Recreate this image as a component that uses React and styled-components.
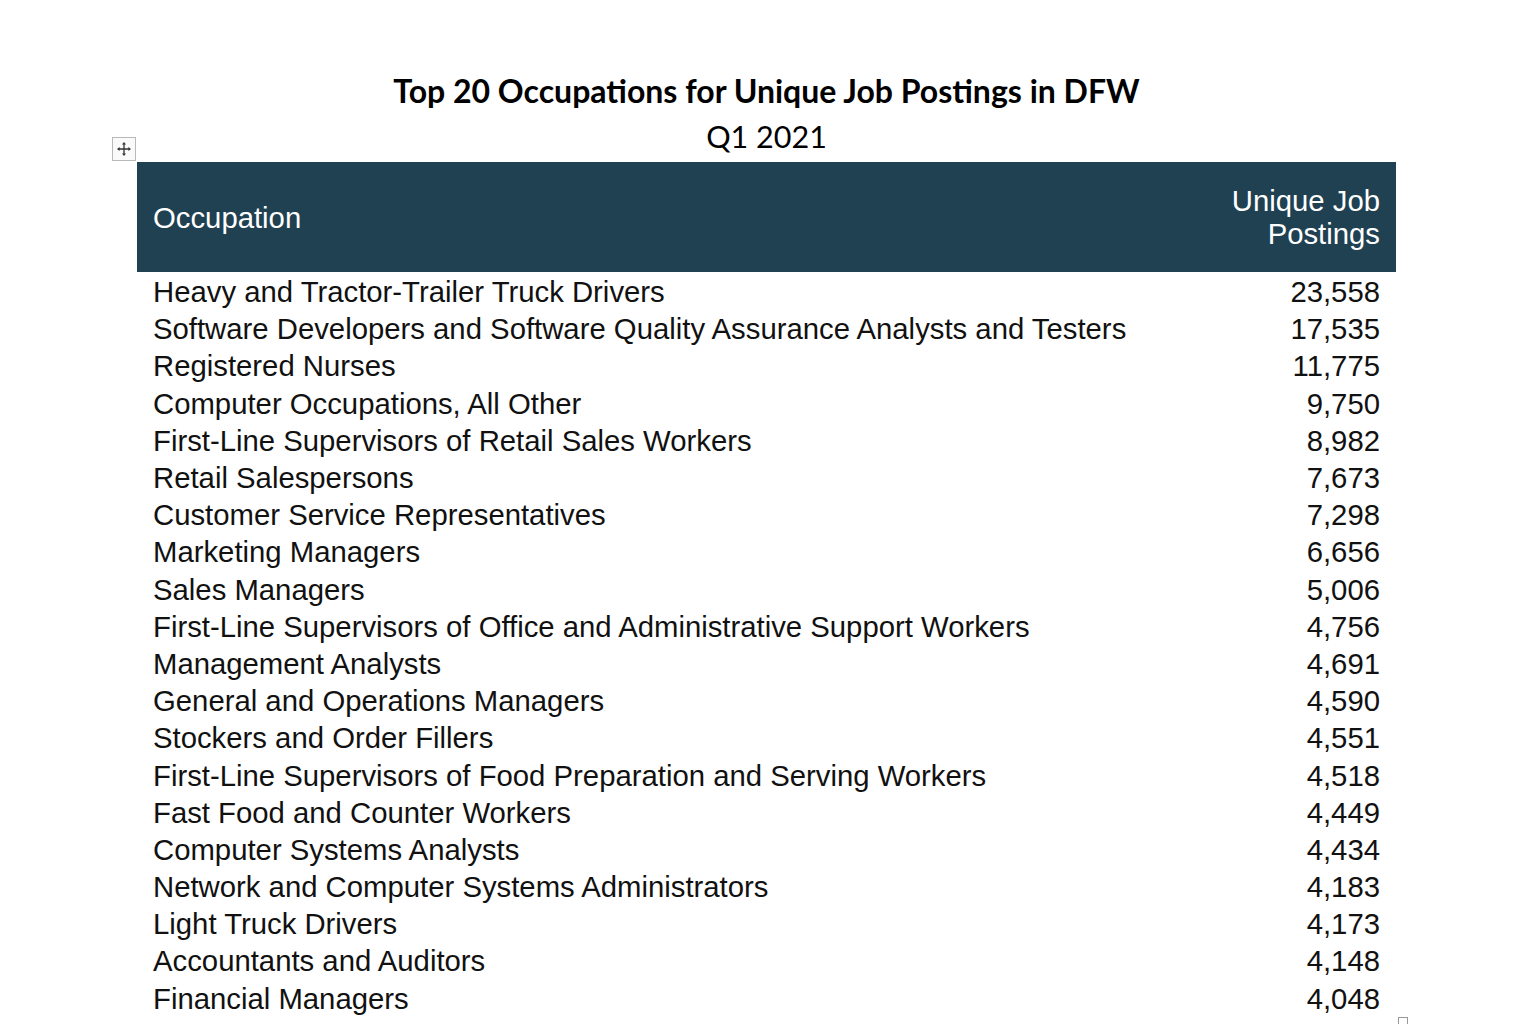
import React from "react";
import styled, { createGlobalStyle } from "styled-components";

const GlobalStyle = createGlobalStyle`
  html, body {
    margin: 0;
    padding: 0;
    background: #ffffff;
  }
  body {
    width: 1536px;
    height: 1024px;
    overflow: hidden;
  }
`;

const Page = styled.div`
  padding: 72px 140px 0 137px;
  box-sizing: border-box;
  width: 1536px;
`;

const Heading = styled.div`
  text-align: center;
  font-family: "Lato", "Open Sans", sans-serif;
  color: #000;
  position: relative;
`;

const Title = styled.h1`
  margin: 0;
  font-size: 32px;
  font-weight: 700;
  line-height: 38px;
`;

const Subtitle = styled.div`
  font-size: 30.5px;
  line-height: 52px;
`;

const MoveHandle = styled.div`
  position: absolute;
  left: -25px;
  bottom: 1px;
  width: 24px;
  height: 24px;
  box-sizing: border-box;
  border: 1px solid #b9b9b9;
  background: #fafafa;
  display: flex;
  align-items: center;
  justify-content: center;
`;

const Table = styled.table`
  width: 1259px;
  border-collapse: collapse;
  font-family: "Liberation Sans", Arial, sans-serif;
  font-size: 29.3px;
  color: #111;
`;

const HeadRow = styled.tr`
  background: #1f4152;
  height: 110px;
`;

const HeadCell = styled.th`
  color: #ffffff;
  font-weight: 400;
  text-align: ${(p) => (p.$right ? "right" : "left")};
  padding: 0 16px;
  line-height: 33px;
  vertical-align: middle;
`;

const Cell = styled.td`
  text-align: ${(p) => (p.$right ? "right" : "left")};
  padding: 0 16px;
  height: 37.2px;
  line-height: 37px;
  white-space: nowrap;
`;

const FirstRow = styled.tr`
  td {
    padding-top: 1px;
  }
`;

const rows = [
  ["Heavy and Tractor-Trailer Truck Drivers", "23,558"],
  ["Software Developers and Software Quality Assurance Analysts and Testers", "17,535"],
  ["Registered Nurses", "11,775"],
  ["Computer Occupations, All Other", "9,750"],
  ["First-Line Supervisors of Retail Sales Workers", "8,982"],
  ["Retail Salespersons", "7,673"],
  ["Customer Service Representatives", "7,298"],
  ["Marketing Managers", "6,656"],
  ["Sales Managers", "5,006"],
  ["First-Line Supervisors of Office and Administrative Support Workers", "4,756"],
  ["Management Analysts", "4,691"],
  ["General and Operations Managers", "4,590"],
  ["Stockers and Order Fillers", "4,551"],
  ["First-Line Supervisors of Food Preparation and Serving Workers", "4,518"],
  ["Fast Food and Counter Workers", "4,449"],
  ["Computer Systems Analysts", "4,434"],
  ["Network and Computer Systems Administrators", "4,183"],
  ["Light Truck Drivers", "4,173"],
  ["Accountants and Auditors", "4,148"],
  ["Financial Managers", "4,048"],
];

// four-way move cross with small filled arrowheads
const MoveIcon = () => (
  <svg width="16" height="16" viewBox="0 0 16 16">
    <path d="M8 3v10M3 8h10" stroke="#333" strokeWidth="1.3" />
    <path
      d="M8 1L10 3.6H6zM8 15L10 12.4H6zM1 8L3.6 6V10zM15 8L12.4 6V10z"
      fill="#333"
    />
  </svg>
);

const ResizeHandle = styled.div`
  position: absolute;
  left: 1398px;
  top: 1017px;
  width: 8px;
  height: 8px;
  border: 1px solid #999;
  background: #fff;
`;

const App = () => (
  <>
    <GlobalStyle />
    <Page>
      <Heading>
        <Title>Top 20 Occupations for Unique Job Postings in DFW</Title>
        <Subtitle>Q1 2021</Subtitle>
        <MoveHandle>
          <MoveIcon />
        </MoveHandle>
      </Heading>
      <Table>
        <thead>
          <HeadRow>
            <HeadCell>Occupation</HeadCell>
            <HeadCell $right>
              Unique Job
              <br />
              Postings
            </HeadCell>
          </HeadRow>
        </thead>
        <tbody>
          {rows.map(([name, count], i) =>
            i === 0 ? (
              <FirstRow key={name}>
                <Cell>{name}</Cell>
                <Cell $right>{count}</Cell>
              </FirstRow>
            ) : (
              <tr key={name}>
                <Cell>{name}</Cell>
                <Cell $right>{count}</Cell>
              </tr>
            )
          )}
        </tbody>
      </Table>
    </Page>
    <ResizeHandle />
  </>
);

export default App;
